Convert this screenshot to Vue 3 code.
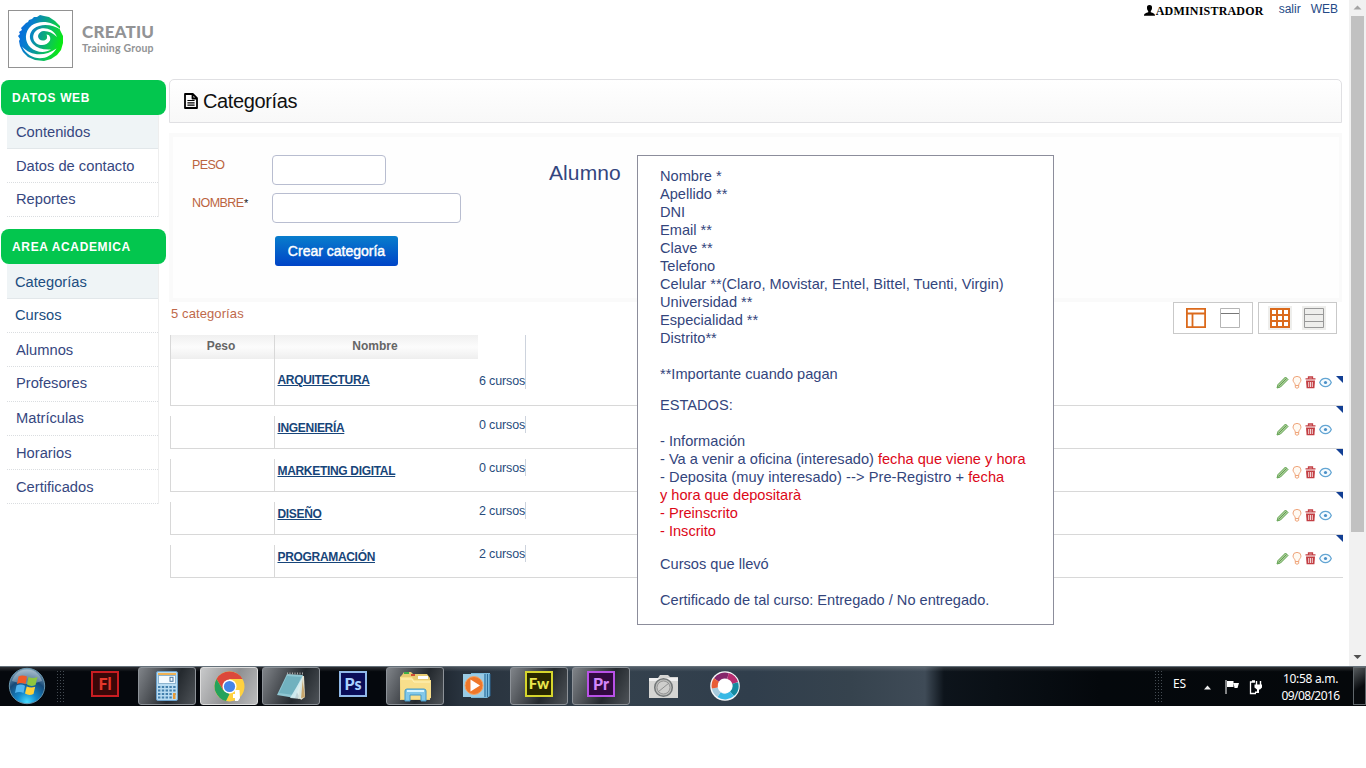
<script setup>
const menus = [
  {
    title: 'DATOS WEB',
    items: [
      { label: 'Contenidos', active: true },
      { label: 'Datos de contacto' },
      { label: 'Reportes', raised: true }
    ]
  },
  {
    title: 'AREA ACADEMICA',
    items: [
      { label: 'Categorías', active: true, shifted: true, tall: true },
      { label: 'Cursos', shifted: true, raised: true },
      { label: 'Alumnos' },
      { label: 'Profesores', raised: true },
      { label: 'Matrículas', raised: true },
      { label: 'Horarios' },
      { label: 'Certificados' }
    ]
  }
]

const rows = [
  { name: 'ARQUITECTURA', count: 6 },
  { name: 'INGENIERÍA', count: 0 },
  { name: 'MARKETING DIGITAL', count: 0 },
  { name: 'DISEÑO', count: 2 },
  { name: 'PROGRAMACIÓN', count: 2 }
]

const fields = [
  'Nombre *', 'Apellido **', 'DNI', 'Email **', 'Clave **', 'Telefono',
  'Celular **(Claro, Movistar, Entel, Bittel, Tuenti, Virgin)',
  'Universidad **', 'Especialidad **', 'Distrito**'
]
</script>

<template>
  <div class="screen">
    <div class="browser">
      <div class="page">
        <header class="top">
          <div class="brand">
            <div class="logo">
              <svg width="46" height="48" viewBox="0 0 46 48">
                <defs>
                  <linearGradient id="swirl" x1="0" y1="0.35" x2="1" y2="0.65">
                    <stop offset="0" stop-color="#0868e0" />
                    <stop offset="0.25" stop-color="#0780cc" />
                    <stop offset="0.5" stop-color="#0a9f8c" />
                    <stop offset="0.75" stop-color="#0ccb4c" />
                    <stop offset="1" stop-color="#08ee08" />
                  </linearGradient>
                </defs>
                <path d="M8 8 10 7 11 5 14 4 16 2 19 2 22 0 26 1 31 2 37 6 42 11 42 15 45 21 45 28 43 35 39 40 33 44 26 46 17 45 10 42 5 37 2 31 1 26 2 24 0 21 2 19 1 17 4 15 3 13Z" fill="url(#swirl)" />
                <g fill="#fff">
                  <path d="M43 15C35 5.500 21 5 13.500 10.500C6 16.500 6.500 27 12.500 32.500C18 37.500 27 38.500 33 34.500C25 35 19 33 15 29C10.500 24 11 17.500 16 13.500C22 8.500 34 8.500 43 15Z" />
                  <path d="M39 22C35 13 25 11.500 19 15C14 18.500 14 25 18.500 28.500C22.500 31 29 31 32 25.500C33 22.500 31.500 19.500 28.500 19.500C30 23 28.500 25 26 25.500C22.500 26 20 24 20 21C20.500 18 23 16 26 16C31 16 35 18 39 22Z" />
                  <path d="M4 31.500C12 40.500 26 42.500 38.500 33.500C30 47.500 11 46 4 31.500Z" />
                </g>
              </svg>
            </div>
            <div class="wordmark"><b>CREATIU</b><span>Training Group</span></div>
          </div>
          <nav class="account">
            <svg width="11" height="11" viewBox="0 0 11 11"><path d="M5.5 0C7.4 0 8.2 1.2 8 3.2C7.9 4.5 7.3 5.4 6.8 6V7.2C8.8 8 11 8.2 11 10.8H0C0 8.2 2.2 8 4.2 7.2V6C3.6 5.4 3.1 4.5 3 3.2C2.8 1.2 3.6 0 5.5 0Z" /></svg>
            <strong>ADMINISTRADOR</strong>
            <a class="exit">salir</a>
            <a>WEB</a>
          </nav>
        </header>

        <div class="body">
          <aside class="sidebar">
            <section v-for="m in menus" :key="m.title" class="menu">
              <h2>{{ m.title }}</h2>
              <ul>
                <li v-for="i in m.items" :key="i.label" :class="{ active: i.active, shifted: i.shifted, raised: i.raised, tall: i.tall }">{{ i.label }}</li>
              </ul>
            </section>
          </aside>

          <main class="content">
            <div class="title">
              <svg width="14" height="16" viewBox="0 0 14 16"><path d="M1 1H8.8L13 5.2V15H1ZM8.5 1V5.5H13" fill="none" stroke="#000" stroke-width="1.8" stroke-linejoin="round" /><path d="M3.4 7.5H10.6M3.4 9.8H10.6M3.4 12.1H10.6" stroke="#000" stroke-width="1.2" /></svg>
              <h1>Categorías</h1>
            </div>

            <form class="form" @submit.prevent>
              <div class="field"><label>PESO</label><input class="short" /></div>
              <div class="field"><label>NOMBRE<i>*</i></label><input /></div>
              <button type="submit">Crear categoría</button>
            </form>

            <div class="summary">
              <span>5 categorías</span>
              <div class="views">
                <div class="group">
                  <svg width="20" height="20" viewBox="0 0 20 20" fill="none" stroke="#db6a1c" stroke-width="1.8"><path d="M.9.9H19.1V19.1H.9ZM1 5.5H19M6.500 5.500V19" /></svg>
                  <svg width="20" height="20" viewBox="0 0 20 20" fill="none" stroke="#b5b5b5"><path d="M.5.5H19.5V19.5H.5Z" /><path d="M1 5.5H19" stroke="#777" /></svg>
                </div>
                <div class="group">
                  <svg class="shade" width="24" height="24" viewBox="-2 -2 24 24" fill="none" stroke="#db6a1c" stroke-width="2"><path d="M1 1H19V19H1Z" fill="#fff" /><path d="M1 7H19M1 13H19M7 1V19M13 1V19" /></svg>
                  <svg class="shade" width="24" height="24" viewBox="-2 -2 24 24" fill="none" stroke="#999"><path d="M.5.5H19.5V19.5H.5ZM1 6.5H19M1 13.5H19" /></svg>
                </div>
              </div>
            </div>

            <div class="table">
              <div v-for="(r, n) in rows" :key="r.name" class="row" :class="{ first: n === 0 }">
                <div class="peso"><div v-if="n === 0" class="th">Peso</div></div>
                <div class="name"><div v-if="n === 0" class="th">Nombre</div><a>{{ r.name }}</a></div>
                <div class="count">{{ r.count }} cursos</div>
                <div class="actions">
                  <svg width="13" height="13" viewBox="0 0 13 13"><path d="M1 12 2 8.5 9.5 1 12 3.5 4.5 11Z" fill="#a9cf96" stroke="#64a454" stroke-width="1" /><path d="M2.5 10.5 10.5 2.5" stroke="#528e44" stroke-width=".8" /></svg>
                  <svg width="10" height="13" viewBox="0 0 10 13"><path d="M3.300 9C3 7 1 6 1 4A4 3.600 0 0 1 9 4C9 6 7 7 6.700 9V11.500Q5 13 3.300 11.500ZM3.300 9.500H6.700" fill="#fffaf3" stroke="#efa47a" stroke-width="1" /></svg>
                  <svg width="11" height="13" viewBox="0 0 11 13"><path d="M1 4.5H10L9.4 12.3H1.6Z" fill="#c33e43" /><path d="M.5 2.8H10.5M3.5 2.5V1H7.5V2.5" fill="none" stroke="#c33e43" stroke-width="1.3" /><path d="M3.7 6V11M5.5 6V11M7.3 6V11" stroke="#fff" stroke-width=".8" /></svg>
                  <svg width="13" height="11" viewBox="0 0 13 11"><path d="M.7 5.5C3 .1 10 .1 12.3 5.5C10 10.9 3 10.9 .7 5.5Z" fill="#f5fbff" stroke="#63a5d3" stroke-width="1.2" /><circle cx="6.5" cy="5.5" r="1.6" fill="#4b90c8" /></svg>
                </div>
                <svg class="corner" width="7" height="7"><path d="M0 0H7V7Z" fill="#123f94" /></svg>
              </div>
            </div>
          </main>
        </div>

        <div class="caption">Alumno</div>
        <article class="note">
          <p v-for="f in fields" :key="f">{{ f }}</p>
          <p class="important">**Importante cuando pagan</p>
          <p class="states">ESTADOS:</p>
          <p>- Información</p>
          <p>- Va a venir a oficina (interesado) <em>fecha que viene y hora</em></p>
          <p class="deposit">- Deposita (muy interesado) --&gt; Pre-Registro + <em>fecha</em></p>
          <p><em>y hora que depositarà</em></p>
          <p><em>- Preinscrito</em></p>
          <p><em>- Inscrito</em></p>
          <p class="taken">Cursos que llevó</p>
          <p>Certificado de tal curso: Entregado / No entregado.</p>
        </article>
      </div>

      <div class="scrollbar">
        <svg width="17" height="16"><path d="M4.5 9.5H12.5L8.5 5.5Z" fill="#a3a3a3" /></svg>
        <div class="thumb"></div>
        <svg class="down" width="17" height="16"><path d="M4.5 5H12.5L8.5 9Z" fill="#505050" /></svg>
      </div>
    </div>

    <footer class="taskbar">
      <div class="start">
        <svg width="40" height="38" viewBox="0 0 40 38">
          <defs>
            <radialGradient id="orb" cx=".5" cy=".95" r=".95"><stop offset="0" stop-color="#48dcff" /><stop offset=".3" stop-color="#1488cb" /><stop offset=".65" stop-color="#174a78" /><stop offset="1" stop-color="#8ba9bd" /></radialGradient>
          </defs>
          <circle cx="20" cy="19" r="17.7" fill="url(#orb)" stroke="#6795ad" />
          <path d="M5 14A15.5 15.5 0 0 1 35 14Q20 20 5 14" fill="#fff" opacity=".3" />
          <path d="M11.5 9.5Q15 7.5 20 9.5L18.5 17Q14 15 10 17Z" fill="#ef5a28" />
          <path d="M21.5 10Q26 12 30.5 10L28.5 18Q24 20 20 17.5Z" fill="#8ec63f" />
          <path d="M9.5 18.5Q14 16.5 18 18.7L16.5 26Q12.5 24 8 26Z" fill="#51b5f0" />
          <path d="M19.7 19.5Q24 21.5 28.2 19.8L26.5 27Q22 29 18 26.5Z" fill="#ffd13a" />
        </svg>
      </div>
      <div class="grip"></div>
      <div class="apps">
        <div class="app"><div class="tile fl">Fl</div></div>
        <div class="app open">
          <svg width="22" height="30" viewBox="0 0 22 30"><rect x=".5" y=".5" width="21" height="29" rx="1.5" fill="#b9dcf2" stroke="#6aa0cb" /><rect x="2" y="2" width="18" height="2" fill="#efb154" /><rect x="2.5" y="4.5" width="17" height="8" fill="#f4faff" stroke="#8cb4d0" /><rect x="14" y="6.3" width="3" height="4" fill="none" stroke="#48759c" /><g stroke="#437fac" stroke-width="2.2" stroke-dasharray="2.4 1.4"><path d="M2 16H20M2 19.5H20M2 23H20M2 26.5H17" /></g><rect x="17" y="22" width="2.5" height="6" fill="#e99b35" /></svg>
        </div>
        <div class="app open bright">
          <svg width="31" height="31" viewBox="0 0 31 31"><circle cx="15.5" cy="15.5" r="15" fill="#ffd13f" /><path d="M2.5 8A15 15 0 0 1 28.5 8H15.5L9 19Z" fill="#dc483b" /><path d="M2.5 8L9 19 15.5 23 12 30A15 15 0 0 1 2.5 8Z" fill="#24a25b" /><circle cx="15.5" cy="15.5" r="7" fill="#fff" /><circle cx="15.5" cy="15.5" r="5.6" fill="#4585e8" /><path d="M21 19H25.5L26 27 24 30H21V27H19V23H21Z" fill="#fff" /></svg>
        </div>
        <div class="app open">
          <svg width="30" height="31" viewBox="0 0 30 31"><path d="M12 4 28 5 29 26 25 29Z" fill="#e6dfc9" /><path d="M26 6 29 26 22 28Z" fill="#c7a66d" /><path d="M11 3 27 4 19 27 1 24Z" fill="#8fc6d2" /><path d="M11 5 25 6 18 24 3 22Z" fill="#61a6b6" opacity=".65" /><path d="M27 5 25 28 14 27Z" fill="#dbf0f3" opacity=".85" /><path d="M11 2.5H27" stroke="#a9a9a9" stroke-width="2" stroke-dasharray="1 1.5" /></svg>
        </div>
        <div class="app"><div class="tile ps">Ps</div></div>
        <div class="app open">
          <svg width="33" height="31" viewBox="0 0 33 31"><path d="M3 4 5 1H12L14 3H28L31 7V29H1V6Z" fill="#e7cb72" /><path d="M5 1H10V3H5Z" fill="#3faf48" /><path d="M12 3H16V5H12Z" fill="#d24d35" /><path d="M19 5H29V8H19Z" fill="#fff" /><path d="M1 6 13 6 15 9H32V27L29 28H2Z" fill="#f8df8c" /><path d="M2 8H13L15 11H31" fill="none" stroke="#fff4ba" /><path d="M6 30V20Q6 18 8 18H25Q27 18 27 20V30H22V24H11V30Z" fill="#82c8e9" stroke="#4498c4" /><path d="M8 20H25" stroke="#d8f5ff" stroke-width="2" /></svg>
        </div>
        <div class="app">
          <svg width="28" height="26" viewBox="0 0 28 26"><path d="M8 0H27V23L24 25H8Z" fill="#79b9db" /><path d="M22 1V24M24.5 1V24M27 1V23" stroke="#2c6d9b" /><rect x="0" y="1" width="21" height="23" fill="#9acbe4" /><circle cx="11" cy="12.5" r="9" fill="#ef772a" stroke="#f7a25f" /><path d="M7.5 6.5 17 12.5 7.5 18.5Z" fill="#fff" /></svg>
        </div>
        <div class="app open"><div class="tile fw">Fw</div></div>
        <div class="app open"><div class="tile pr">Pr</div></div>
        <div class="app">
          <svg width="31" height="25" viewBox="0 0 31 25"><path d="M1 4H10L12 1H20L22 3H30V24H1Z" fill="#d5d5d3" /><path d="M1 4H30V7H1Z" fill="#efefef" /><circle cx="15.5" cy="13.5" r="8.8" fill="#bcbdbb" stroke="#747879" stroke-width="1.5" /><circle cx="15.5" cy="13.5" r="6.5" fill="#cececc" stroke="#969696" /><path d="M10 18 21 9" stroke="#8f9090" /></svg>
        </div>
        <div class="app">
          <svg width="30" height="30" viewBox="0 0 30 30"><circle cx="15" cy="15" r="14.8" fill="#f5f8fa" /><g fill="none" stroke-width="6"><path d="M6.4 9A10.5 10.5 0 0 1 18 5" stroke="#85266b" /><path d="M18 5A10.5 10.5 0 0 1 25.2 12" stroke="#b72d70" /><path d="M25.2 12A10.5 10.5 0 0 1 22 22.8" stroke="#168aa0" /><path d="M22 22.8A10.5 10.5 0 0 1 9 23.6" stroke="#38b9e5" /><path d="M9 23.6A10.5 10.5 0 0 1 4.8 17" stroke="#a5c9dc" /><path d="M4.8 17A10.5 10.5 0 0 1 6.4 9" stroke="#e95d37" /></g><circle cx="15" cy="15" r="7" fill="#fff" /></svg>
        </div>
      </div>
      <div class="tray">
        <div class="grip"></div>
        <span class="lang">ES</span>
        <svg class="up" width="7" height="5"><path d="M0 4.5H7L3.5 .5Z" fill="#eee" /></svg>
        <svg class="flag" width="15" height="14" viewBox="0 0 15 14"><path d="M1 0V14" stroke="#fff" /><path d="M2 1H8.500V7H2ZM8.500 3H14L12.500 8H9.500Z" fill="#fff" /></svg>
        <svg class="plug" width="14" height="15" viewBox="0 0 14 15"><path d="M6 2H1.5V13.5H7M3 .8H6" fill="none" stroke="#fff" stroke-width="1.3" /><path d="M5.500 4.500H13V7.500L11 9.500H10V13H6V11.500H8V9.500L5.500 7.500Z" fill="#fff" /><path d="M7.500 1V5M11.500 1V5" stroke="#fff" stroke-width="1.400" /></svg>
        <div class="clock"><span>10:58 a.m.</span><span>09/08/2016</span></div>
        <div class="desktop"></div>
      </div>
    </footer>
  </div>
</template>

<style>
body { margin: 0; background: #fff; }
</style>

<style scoped>
* { box-sizing: border-box; }
h1, h2, p, ul { margin: 0; padding: 0; font-weight: normal; }
svg { display: block; flex: none; }
.screen { width: 1366px; height: 768px; overflow: hidden; background: #fff; font-family: "Liberation Sans", Arial, sans-serif; color: #284680; }
.browser { display: flex; height: 666px; }
.page { position: relative; width: 1349px; }

.top { display: flex; justify-content: space-between; height: 79px; padding: 10px 11px 0 8px; }
.brand { display: flex; }
.logo { display: flex; justify-content: center; align-items: center; width: 65px; height: 58px; border: 1px solid #929292; }
.wordmark { display: flex; flex-direction: column; margin-left: 9px; padding-top: 12px; font-family: Lato, sans-serif; color: #929395; }
.wordmark b { font-size: 17px; line-height: 20px; font-weight: 900; letter-spacing: .2px; }
.wordmark span { font-size: 10.5px; line-height: 13px; font-weight: bold; letter-spacing: .2px; }
.account { display: flex; height: 20px; margin-top: -10px; font-size: 12px; line-height: 18px; color: #254a86; }
.account svg { margin: 5px 1px 0 0; }
.account strong { font: bold 12px/22px "Liberation Serif", serif; letter-spacing: .2px; color: #000; }
.exit { margin: 0 10px 0 15px; }

.body { display: flex; }
.sidebar { width: 169px; padding: 1px 3px 0 1px; }
.menu { margin-bottom: 12px; }
.menu h2 { height: 35px; padding: 1px 0 0 11px; border-radius: 8px; background: #03c64e; color: #fff; font-size: 12px; font-weight: bold; line-height: 35px; letter-spacing: .65px; }
.menu ul { width: 152px; margin-left: 6px; list-style: none; border-right: 1px solid #eee; }
.menu li { height: 34.1px; padding-left: 9px; border-bottom: 1px dotted #dadde0; font-size: 14.7px; line-height: 34px; color: #36477f; }
.menu li.active { background: #eff4f6; border-bottom-style: solid; border-bottom-color: #e2e7ea; }
.menu li.shifted { padding-left: 8px; color: #204d80; }
.menu li.raised { line-height: 32px; }
.menu li.tall { height: 35px; line-height: 36px; }

.content { width: 1174px; }
.title { display: flex; align-items: center; gap: 5px; width: 1173px; height: 44px; padding-left: 14px; border: 1px solid #e0e0e3; border-radius: 5px 5px 0 0; background: linear-gradient(#fff, #f8f8f8); }
.title h1 { font-size: 20px; letter-spacing: -.38px; color: #111; }
.form { width: 1173px; height: 169px; margin-top: 10px; padding: 18px 0 0 19px; border: 4px solid #fafafa; border-right-width: 3px; background: #fefefe; }
.field { display: flex; height: 38px; }
.field label { width: 80px; font-size: 12.5px; line-height: 20px; letter-spacing: -.55px; color: #bb643f; }
.field i { font-size: 11px; color: #111; }
.field input { width: 189px; height: 30px; padding: 0; border: 1px solid #b8bdd0; border-radius: 4px; background: #fff; outline: none; }
.field input.short { width: 114px; }
.form button { display: block; width: 123px; height: 30px; margin: 5px 0 0 83px; padding: 0; border: 0; border-radius: 3px; background: linear-gradient(#087dcc, #0044c7); color: #fff; font: 14px "Liberation Sans", Arial, sans-serif; -webkit-text-stroke: .45px #fff; }

.summary { display: flex; justify-content: space-between; height: 33px; padding: 0 6px 0 2px; font-size: 13px; line-height: 24px; letter-spacing: .1px; color: #c0694b; }
.views { display: flex; gap: 5px; }
.group { display: flex; align-items: center; justify-content: space-between; width: 80px; height: 32px; padding: 0 12px; border: 1px solid #c9c9c9; }
.group + .group { width: 79px; padding: 0 10px 0 9px; }
.shade { background: #eeeeec; }

.table { padding-left: 1px; }
.row { position: relative; display: flex; height: 43px; padding-top: 10px; border-bottom: 1px solid #d8d8d8; }
.row.first { height: 71px; padding: 0; }
.peso { width: 105px; border-left: 1px solid #d8d8d8; border-right: 1px solid #d8d8d8; }
.th { height: 24px; padding-right: 3px; background: linear-gradient(#f0f0f0, #fcfcfc 50%, #eee); font-size: 12px; font-weight: bold; line-height: 22px; text-align: center; color: #666; }
.name { width: 204px; }
.name .th { width: 203px; }
.name a { margin-left: 2.5px; font-size: 12px; font-weight: bold; line-height: 24px; letter-spacing: -.32px; text-decoration: underline; color: #174579; }
.first .name a { display: block; padding-top: 9px; }
.count { width: 47px; height: 17px; border-right: 1px solid #cdd3dd; font-size: 12.5px; line-height: 18px; letter-spacing: -.15px; white-space: nowrap; color: #284c7c; }
.first .count { height: 54px; padding-top: 37px; }
.actions { display: flex; align-items: center; gap: 3px; height: 26px; margin-left: auto; padding-right: 11px; }
.row.first .actions { margin-top: 34px; }
.corner { position: absolute; top: 0; right: 0; }
.first .corner { top: 41px; }

.caption { position: absolute; left: 549px; top: 160px; font-size: 21px; line-height: 26px; letter-spacing: .1px; color: #33457e; }
.note { position: absolute; left: 637px; top: 155px; width: 417px; height: 470px; padding: 11px 0 0 22px; border: 1px solid #8c8d9b; background: #fff; font-size: 14.6px; line-height: 18px; white-space: nowrap; color: #33457c; }
.note em { font-style: normal; color: #dc0718; }
.deposit { letter-spacing: .07px; }
.important { margin-top: 18px; }
.states { margin: 13px 0 18px; }
.taken { margin: 15px 0 18px; }

.scrollbar { display: flex; flex-direction: column; width: 17px; background: #f1f1f1; }
.thumb { width: 13px; height: 516px; margin-left: 2px; background: #c1c1c1; }
.down { margin-top: auto; }

.taskbar { display: flex; height: 40px; border-top: 1px solid #65717a; background: linear-gradient(rgba(255,255,255,.16), transparent 12%), linear-gradient(90deg, #05080d 0, #05080d 380px, #28323d 460px, #34414d 620px, #303e4c 750px, #36434e 850px, #3f4b57 925px, #0d141b 944px, #04080c 1100px, #05080b); }
.start { width: 56px; padding-left: 7px; }
.grip { width: 8px; height: 32px; margin-top: 3px; background: radial-gradient(circle, #444b52 .7px, transparent .8px) 0 0 / 3px 3px; }
.apps { display: flex; gap: 4px; margin-left: 12px; }
.app { display: flex; align-items: center; justify-content: center; width: 58px; height: 38px; }
.app.open { border: 1px solid #8d9298; border-radius: 3px; background: linear-gradient(115deg, #808489, #4b4f54 35%, #24292e 60%, #4e5358); }
.app.bright { background: linear-gradient(115deg, #c8c9ca, #8f9092 55%, #bbbcbd); border-color: #ddd; }
.tile { width: 28px; height: 26px; margin-top: -4px; border: 2px solid; font: 900 16px/21px Lato, sans-serif; text-align: center; }
.fl { color: #e5372b; background: #3a0708; border-color: #c81d22; }
.ps { color: #a9d1ff; background: #0a0d58; border-color: #91b9e9; }
.fw { color: #e7e44b; background: #282700; border-color: #d5d52c; font-size: 15px; }
.pr { color: #d386fa; background: #31093f; border-color: #b951e7; }
.tray { display: flex; width: 212px; margin-left: auto; color: #fff; font-family: "Noto Sans", sans-serif; font-size: 12px; }
.lang { margin: 8px 0 0 11px; line-height: 17px; width: 14px; letter-spacing: -.2px; }
.up { margin: 18px 0 0 17px; }
.flag { margin: 13px 0 0 14px; }
.plug { margin: 13px 0 0 9px; }
.clock { display: flex; flex-direction: column; align-items: center; width: 59px; margin: 3px 0 0 18px; line-height: 17px; white-space: nowrap; letter-spacing: -.6px; }
.clock span:first-child { letter-spacing: -.3px; }
.desktop { width: 13px; height: 38px; margin-left: auto; border: 1px solid #60676b; background: linear-gradient(145deg, #555a5d, #080b0e 55%); }
</style>
